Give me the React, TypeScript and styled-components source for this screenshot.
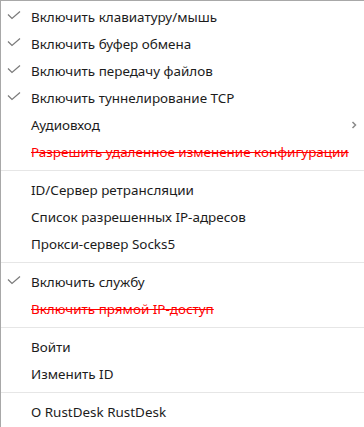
import React from "react";
import styled, { createGlobalStyle } from "styled-components";

const Global = createGlobalStyle`
  html, body {
    margin: 0;
    padding: 0;
    background: #ffffff;
  }
  body {
    font-family: "Noto Sans", "Open Sans", sans-serif;
  }
`;

type Entry =
  | { kind: "item"; label: string; checked?: boolean; disabled?: boolean; submenu?: boolean }
  | { kind: "sep" };

const entries: Entry[] = [
  { kind: "item", label: "Включить клавиатуру/мышь", checked: true },
  { kind: "item", label: "Включить буфер обмена", checked: true },
  { kind: "item", label: "Включить передачу файлов", checked: true },
  { kind: "item", label: "Включить туннелирование TCP", checked: true },
  { kind: "item", label: "Аудиовход", submenu: true },
  { kind: "item", label: "Разрешить удаленное изменение конфигурации", disabled: true },
  { kind: "sep" },
  { kind: "item", label: "ID/Сервер ретрансляции" },
  { kind: "item", label: "Список разрешенных IP-адресов" },
  { kind: "item", label: "Прокси-сервер Socks5" },
  { kind: "sep" },
  { kind: "item", label: "Включить службу", checked: true },
  { kind: "item", label: "Включить прямой IP-доступ", disabled: true },
  { kind: "sep" },
  { kind: "item", label: "Войти" },
  { kind: "item", label: "Изменить ID" },
  { kind: "sep" },
  { kind: "item", label: "О RustDesk RustDesk" },
];

function App() {
  return (
    <>
      <Global />
      <Menu>
        {entries.map((e, i) =>
          e.kind === "sep" ? (
            <Separator key={i} />
          ) : (
            <Row key={i}>
              <CheckSlot>
                {e.checked && (
                  <svg width="14" height="10" viewBox="0 0 14 10">
                    <path d="M1 3.5 L5 7.5 L13 0.5" fill="none" stroke="#7a7a7a" strokeWidth="1.2" />
                  </svg>
                )}
              </CheckSlot>
              <Label $off={e.disabled}>{e.label}</Label>
              {e.submenu && (
                <Arrow>
                  <svg width="6" height="8" viewBox="0 0 6 8">
                    <path d="M1.5 1 L4.5 4 L1.5 7" fill="none" stroke="#8a8a8a" strokeWidth="1.5" />
                  </svg>
                </Arrow>
              )}
            </Row>
          )
        )}
      </Menu>
    </>
  );
}

export default App;
// ------------------------
const Menu = styled.div`
  width: 363px;
  height: 425px;
  border-top: 1px solid #a8a8a8;
  border-left: 1px solid #a8a8a8;
  border-bottom: 1px solid #a8a8a8;
  padding-top: 2px;
  box-sizing: content-box;
  display: flex;
  flex-direction: column;
  overflow: hidden;
  background: #ffffff;
`;

const Row = styled.div`
  height: 27px;
  flex: 0 0 27px;
  display: flex;
  align-items: center;
  position: relative;
`;

const CheckSlot = styled.div`
  width: 30px;
  flex: 0 0 30px;
  display: flex;
  align-items: center;
  padding-left: 6px;
  box-sizing: border-box;
  margin-top: -1px;
`;

const Label = styled.span<{ $off?: boolean }>`
  font-size: 13.45px;
  white-space: nowrap;
  color: ${(p) => (p.$off ? "#ff0000" : "#1c1c1c")};
  text-decoration: ${(p) => (p.$off ? "line-through" : "none")};
`;

const Arrow = styled.div`
  margin-left: auto;
  margin-right: 7px;
  display: flex;
  align-items: center;
`;

const Separator = styled.div`
  flex: 0 0 11px;
  display: flex;
  align-items: center;
  &::after {
    content: "";
    display: block;
    width: 100%;
    height: 1px;
    background: #e6e6e6;
  }
`;
